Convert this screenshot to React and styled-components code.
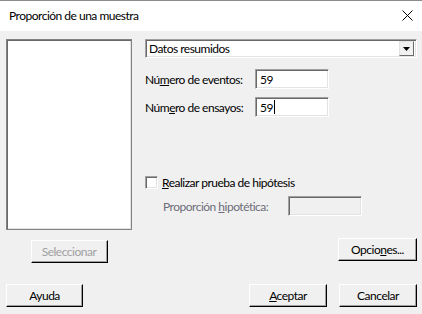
import React from "react";
import styled, { createGlobalStyle } from "styled-components";

const GlobalStyle = createGlobalStyle`
  html, body {
    margin: 0;
    padding: 0;
    background: #f0f0f0;
  }
  body {
    font-family: Lato, "Liberation Sans", sans-serif;
    font-size: 12px;
    letter-spacing: -0.5px;
    color: #000;
  }
  u {
    text-underline-offset: 1px;
  }
`;

const Window = styled.div`
  width: 422px;
  height: 314px;
  display: flex;
  flex-direction: column;
  background: #f0f0f0;
  overflow: hidden;
`;

const TitleBar = styled.div`
  height: 31px;
  flex-shrink: 0;
  box-sizing: border-box;
  background: #fff;
  border-top: 1px solid #8c8c8c;
  display: flex;
  align-items: center;
  justify-content: space-between;
  padding: 0 9px 1px 9px;
  font-size: 12px;
`;

const Body = styled.div`
  display: flex;
  gap: 13px;
  padding: 8px 5px 0 6px;
`;

const LeftCol = styled.div`
  width: 126px;
  display: flex;
  flex-direction: column;
  align-items: center;
`;

const RightCol = styled.div`
  flex: 1;
  display: flex;
  flex-direction: column;
`;

const ListBox = styled.div`
  width: 126px;
  height: 191px;
  box-sizing: border-box;
  background: #fff;
  border: 1px solid #828282;
  box-shadow: inset 1px 1px #696969, inset -1px -1px #e3e3e3;
`;

const Button = styled.button`
  width: ${(p) => p.$w || 77}px;
  height: 23px;
  margin-top: ${(p) => p.$mt || 0}px;
  box-sizing: border-box;
  padding: 0;
  background: #f0f0f0;
  border: 1px solid;
  border-color: #fff #000 #000 #fff;
  box-shadow: inset -1px -1px #a0a0a0;
  font: inherit;
  letter-spacing: inherit;
  color: ${(p) => (p.disabled ? "#a0a0a0" : "#000")};
`;

const sunken = `
  box-sizing: border-box;
  border: 1px solid;
  border-color: #a0a0a0 #fff #fff #a0a0a0;
  box-shadow: inset 1px 1px #696969, inset -1px -1px #e3e3e3;
`;

const Combo = styled.div`
  ${sunken}
  height: 19px;
  background: #fff;
  display: flex;
  align-items: center;
  padding: 0 2px 0 3px;
`;

const ComboText = styled.span`
  flex: 1;
`;

const ArrowBtn = styled.span`
  width: 15px;
  height: 15px;
  box-sizing: border-box;
  background: #f0f0f0;
  border: 1px solid;
  border-color: #e3e3e3 #696969 #696969 #e3e3e3;
  display: flex;
  align-items: center;
  justify-content: center;
`;

const FieldRow = styled.div`
  display: flex;
  align-items: center;
  margin-top: ${(p) => p.$mt}px;
  padding-left: ${(p) => p.$indent || 0}px;
`;

const Label = styled.span`
  width: ${(p) => p.$w}px;
  color: ${(p) => (p.$disabled ? "#6d6d7a" : "#000")};
`;

const TextBox = styled.div`
  ${sunken}
  width: 74px;
  height: 20px;
  background: ${(p) => (p.$disabled ? "#f0f0f0" : "#fff")};
  display: flex;
  align-items: center;
  padding-left: 4px;
`;

const Caret = styled.span`
  display: inline-block;
  width: 1px;
  height: 14px;
  margin-left: 1px;
  background: #000;
`;

const CheckRow = styled.label`
  display: flex;
  align-items: center;
  gap: 4px;
  margin-top: 58px;
`;

const CheckBox = styled.span`
  ${sunken}
  width: 13px;
  height: 13px;
  background: #fff;
`;

const ButtonRow = styled.div`
  display: flex;
  justify-content: flex-end;
  margin-top: 22px;
`;

const Footer = styled.div`
  margin-top: auto;
  display: flex;
  gap: 12px;
  padding: 0 5px 7px 6px;
`;

const Spacer = styled.div`
  flex: 1;
`;

export default function App() {
  return (
    <>
      <GlobalStyle />
      <Window>
        <TitleBar>
          <span>Proporción de una muestra</span>
          <svg width="11" height="11" viewBox="0 0 11 11">
            <path d="M0.5 0.5 L10.5 10.5 M10.5 0.5 L0.5 10.5" stroke="#000" strokeWidth="1" />
          </svg>
        </TitleBar>
        <Body>
          <LeftCol>
            <ListBox />
            <Button disabled $mt={10}>
              Seleccionar
            </Button>
          </LeftCol>
          <RightCol>
            <Combo>
              <ComboText>Datos resumidos</ComboText>
              <ArrowBtn>
                <svg width="7" height="4" viewBox="0 0 7 4">
                  <path d="M0 0 H7 L3.5 4 Z" fill="#000" />
                </svg>
              </ArrowBtn>
            </Combo>
            <FieldRow $mt={11}>
              <Label $w={110}>
                Nú<u>m</u>ero de eventos:
              </Label>
              <TextBox>59</TextBox>
            </FieldRow>
            <FieldRow $mt={8}>
              <Label $w={110}>
                Núm<u>e</u>ro de ensayos:
              </Label>
              <TextBox>
                59
                <Caret />
              </TextBox>
            </FieldRow>
            <CheckRow>
              <CheckBox />
              <span>
                <u>R</u>ealizar prueba de hipótesis
              </span>
            </CheckRow>
            <FieldRow $mt={6} $indent={18}>
              <Label $w={125} $disabled>
                Proporción <u>h</u>ipotética:
              </Label>
              <TextBox $disabled />
            </FieldRow>
            <ButtonRow>
              <Button $w={79}>
                Opcio<u>n</u>es...
              </Button>
            </ButtonRow>
          </RightCol>
        </Body>
        <Footer>
          <Button $w={77}>Ayuda</Button>
          <Spacer />
          <Button $w={78}>
            <u>A</u>ceptar
          </Button>
          <Button $w={78}>Cancelar</Button>
        </Footer>
      </Window>
    </>
  );
}
